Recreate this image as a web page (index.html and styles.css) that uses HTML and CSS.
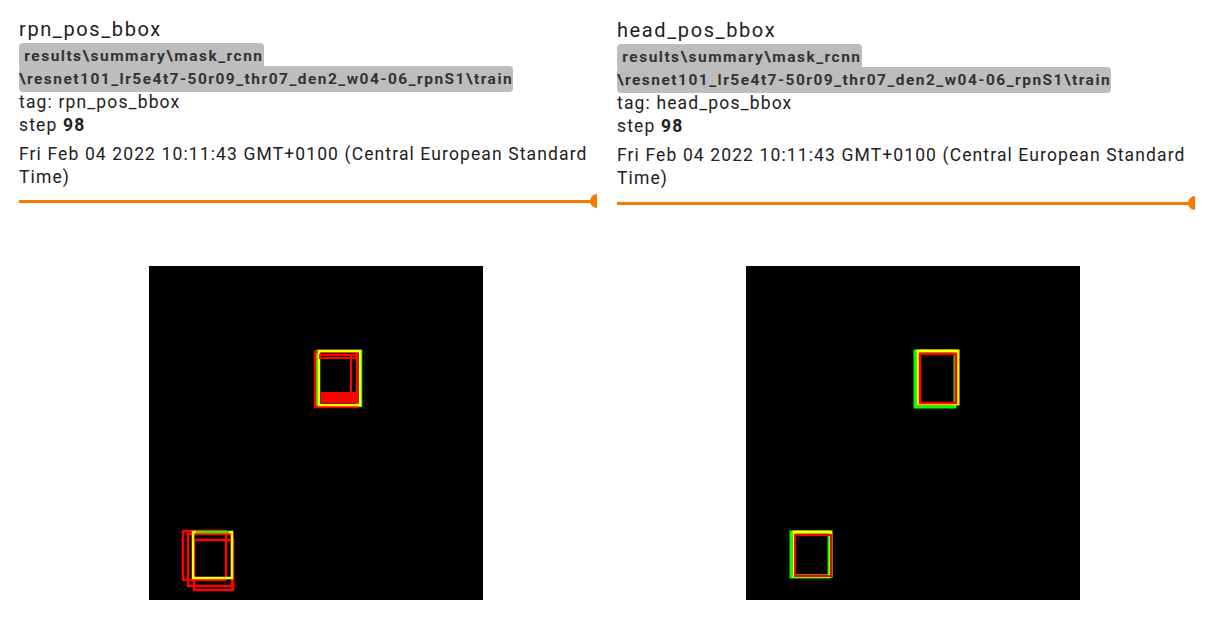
FILE: index.html
```html
<!DOCTYPE html>
<html>
<head>
<meta charset="utf-8">
<link rel="stylesheet" href="styles.css">
</head>
<body>
<div class="grid">
  <div class="card">
    <div class="title">rpn_pos_bbox</div>
    <div class="run"><span class="badge">&nbsp;results\summary\mask_rcnn<br>\resnet101_lr5e4t7-50r09_thr07_den2_w04-06_rpnS1\train</span></div>
    <div class="tag">tag: rpn_pos_bbox</div>
    <div class="step">step <b>98</b></div>
    <div class="date">Fri Feb 04 2022 10:11:43 GMT+0100 (Central European Standard Time)</div>
    <div class="slider"><div class="track"></div><div class="thumb"></div></div>
    <div class="imgwrap">
      <svg class="img" width="334" height="334" viewBox="149 266 334 334">
        <rect x="149" y="266" width="334" height="334" fill="#000"/>
        <g fill="none" stroke-width="2.5">
          <rect x="317" y="351" width="44" height="55" stroke="#00ff00"/>
          <rect x="315" y="352" width="42" height="55" stroke="#ff0000"/>
          <rect x="319" y="351" width="41" height="54" stroke="#ffff00"/>
          <rect x="320" y="355" width="36" height="3" stroke="#ff0000" stroke-width="2"/>
          <line x1="351" y1="355" x2="351" y2="396" stroke="#ff0000" stroke-width="2"/>
          <rect x="321" y="392" width="37" height="11" fill="#ff0000" stroke="none"/>
          <rect x="183" y="531" width="43" height="49" stroke="#ff0000" rx="1"/>
          <rect x="188" y="534" width="44" height="52" stroke="#ff0000"/>
          <rect x="194" y="540" width="39" height="50" stroke="#ff0000"/>
          <rect x="193" y="532" width="39" height="46" stroke="#ffff00"/>
          <line x1="196" y1="532" x2="229" y2="532" stroke="#00ff00" stroke-width="2"/>
        </g>
      </svg>
    </div>
  </div>
  <div class="card card-right">
    <div class="title">head_pos_bbox</div>
    <div class="run"><span class="badge">&nbsp;results\summary\mask_rcnn<br>\resnet101_lr5e4t7-50r09_thr07_den2_w04-06_rpnS1\train</span></div>
    <div class="tag">tag: head_pos_bbox</div>
    <div class="step">step <b>98</b></div>
    <div class="date">Fri Feb 04 2022 10:11:43 GMT+0100 (Central European Standard Time)</div>
    <div class="slider"><div class="track"></div><div class="thumb"></div></div>
    <div class="imgwrap">
      <svg class="img" width="334" height="334" viewBox="746 266 334 334">
        <rect x="746" y="266" width="334" height="334" fill="#000"/>
        <g fill="none" stroke-width="3">
          <rect x="915" y="351" width="40" height="56" stroke="#00ff00"/>
          <rect x="918" y="351" width="40" height="53" stroke="#ffff00"/>
          <rect x="920" y="354" width="36" height="49" stroke="#ff0000" stroke-width="2.5"/>
          <rect x="791" y="532" width="38" height="45" stroke="#00ff00"/>
          <rect x="794" y="532" width="37" height="44" stroke="#ffff00"/>
          <rect x="795" y="535" width="36" height="41" stroke="#ff0000" stroke-width="2"/>
        </g>
      </svg>
    </div>
  </div>
</div>
</body>
</html>
```

FILE: styles.css
```css
html, body {
  margin: 0;
  padding: 0;
  background: #fff;
}
body {
  font-family: Roboto, "Noto Sans", sans-serif;
  color: #212121;
}
.grid {
  display: flex;
  gap: 20px;
  padding: 17px 0 0 19px;
}
.card {
  width: 578px;
  display: flex;
  flex-direction: column;
}
.card-right {
  padding-top: 1px;
}
.card-right .slider {
  margin-top: 6px;
}
.card-right .imgwrap {
  margin-top: 56px;
  padding-left: 129px;
}
.title {
  font-size: 20px;
  line-height: 24px;
  letter-spacing: 1.6px;
}
.run {
  margin-top: 4px;
  font-size: 15.5px;
  font-weight: bold;
  line-height: 23px;
  letter-spacing: 1.48px;
  color: #333;
}
.badge {
  background: #bdbdbd;
  border-radius: 4px;
  padding: 4px 0;
  box-decoration-break: clone;
  -webkit-box-decoration-break: clone;
}
.tag, .step, .date {
  font-size: 17.5px;
  line-height: 23px;
  letter-spacing: 1.15px;
}
.step b {
  font-weight: bold;
}
.date {
  margin-top: 6px;
  letter-spacing: 1.12px;
}
.slider {
  position: relative;
  height: 14px;
  margin-top: 5px;
  overflow: hidden;
}
.track {
  position: absolute;
  left: 0;
  right: 4px;
  top: 6px;
  height: 2.5px;
  background: #f57c00;
}
.thumb {
  position: absolute;
  right: -7px;
  top: 0;
  width: 14px;
  height: 14px;
  border-radius: 50%;
  background: #f57c00;
}
.imgwrap {
  margin-top: 58px;
  padding-left: 130px;
}
.img {
  display: block;
}
```
